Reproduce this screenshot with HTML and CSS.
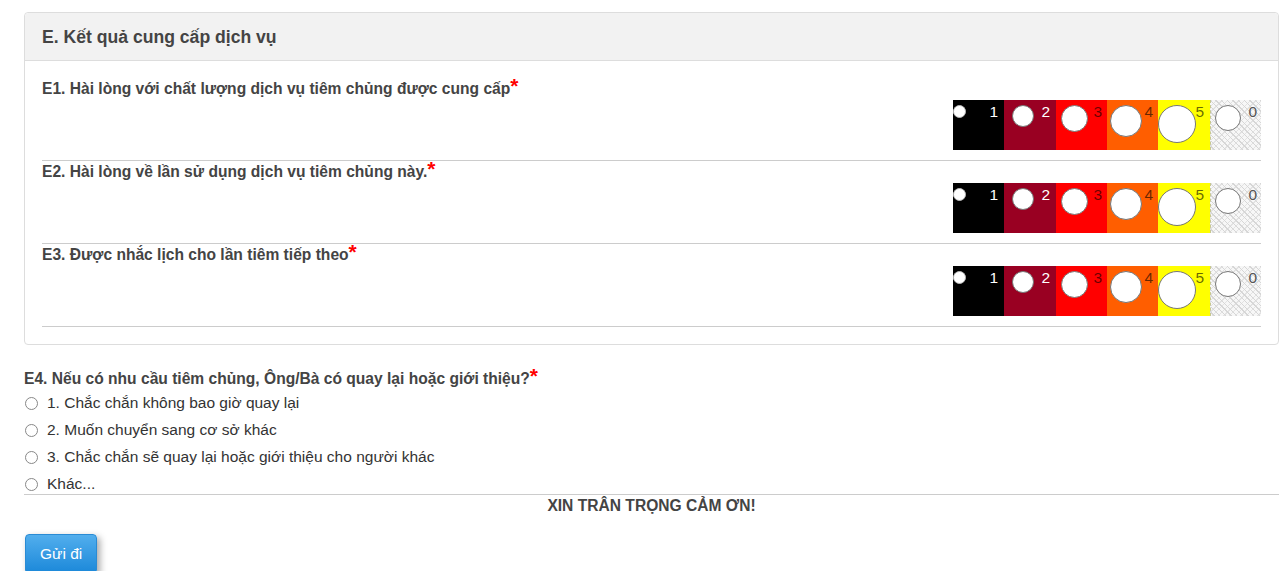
FILE: index.html
```html
<!DOCTYPE html>
<html lang="vi">
<head>
<meta charset="utf-8">
<title>Kết quả cung cấp dịch vụ</title>
<link rel="stylesheet" href="styles.css">
</head>
<body>
<div class="page">
  <section class="panel">
    <div class="panel-heading">E. Kết quả cung cấp dịch vụ</div>
    <div class="panel-body">
      <div class="q-row">
        <div class="q-label">E1. Hài lòng với chất lượng dịch vụ tiêm chủng được cung cấp<span class="req">*</span></div>
        <div class="scale">
          <label class="cell c1"><input type="radio" name="e1"><span class="num">1</span></label>
          <label class="cell c2"><input type="radio" name="e1"><span class="num">2</span></label>
          <label class="cell c3"><input type="radio" name="e1"><span class="num">3</span></label>
          <label class="cell c4"><input type="radio" name="e1"><span class="num">4</span></label>
          <label class="cell c5"><input type="radio" name="e1"><span class="num">5</span></label>
          <label class="cell c0"><input type="radio" name="e1"><span class="num">0</span></label>
        </div>
      </div>
      <div class="q-row">
        <div class="q-label">E2. Hài lòng về lần sử dụng dịch vụ tiêm chủng này.<span class="req">*</span></div>
        <div class="scale">
          <label class="cell c1"><input type="radio" name="e2"><span class="num">1</span></label>
          <label class="cell c2"><input type="radio" name="e2"><span class="num">2</span></label>
          <label class="cell c3"><input type="radio" name="e2"><span class="num">3</span></label>
          <label class="cell c4"><input type="radio" name="e2"><span class="num">4</span></label>
          <label class="cell c5"><input type="radio" name="e2"><span class="num">5</span></label>
          <label class="cell c0"><input type="radio" name="e2"><span class="num">0</span></label>
        </div>
      </div>
      <div class="q-row">
        <div class="q-label">E3. Được nhắc lịch cho lần tiêm tiếp theo<span class="req">*</span></div>
        <div class="scale">
          <label class="cell c1"><input type="radio" name="e3"><span class="num">1</span></label>
          <label class="cell c2"><input type="radio" name="e3"><span class="num">2</span></label>
          <label class="cell c3"><input type="radio" name="e3"><span class="num">3</span></label>
          <label class="cell c4"><input type="radio" name="e3"><span class="num">4</span></label>
          <label class="cell c5"><input type="radio" name="e3"><span class="num">5</span></label>
          <label class="cell c0"><input type="radio" name="e3"><span class="num">0</span></label>
        </div>
      </div>
    </div>
  </section>

  <div class="q4">
    <div class="q-label">E4. Nếu có nhu cầu tiêm chủng, Ông/Bà có quay lại hoặc giới thiệu?<span class="req">*</span></div>
    <div class="options">
      <label class="opt"><input type="radio" name="e4"><span>1. Chắc chắn không bao giờ quay lại</span></label>
      <label class="opt"><input type="radio" name="e4"><span>2. Muốn chuyển sang cơ sở khác</span></label>
      <label class="opt"><input type="radio" name="e4"><span>3. Chắc chắn sẽ quay lại hoặc giới thiệu cho người khác</span></label>
      <label class="opt"><input type="radio" name="e4"><span>Khác...</span></label>
    </div>
  </div>
  <div class="thanks">XIN TRÂN TRỌNG CẢM ƠN!</div>
  <button class="submit" type="button">Gửi đi</button>
</div>
</body>
</html>
```
FILE: styles.css
```css
* { box-sizing: border-box; }
html, body { margin: 0; padding: 0; background: #fff; }
body {
  font-family: "Liberation Sans", Arial, Helvetica, sans-serif;
  color: #444;
  overflow: hidden;
}
.page {
  padding: 12px 8px 0 24px;
}
.panel {
  border: 1px solid #ddd;
  border-radius: 4px;
  background: #fff;
}
.panel-heading {
  background: #f2f2f2;
  border-bottom: 1px solid #ddd;
  border-radius: 4px 4px 0 0;
  padding: 12px 17px 11px;
  font-size: 17.6px;
  line-height: 24px;
  font-weight: bold;
  color: #444;
}
.panel-body {
  padding: 17px 17px 17px;
}
.q-row {
  display: flex;
  flex-direction: column;
  border-bottom: 1px solid #ccc;
  padding-bottom: 10px;
}
.q-label {
  font-size: 15.6px;
  line-height: 22px;
  font-weight: bold;
  color: #444;
}
.req {
  color: #f00;
  font-size: 21px;
  line-height: 0;
  font-weight: bold;
  position: relative;
  top: -1px;
}
.scale {
  display: flex;
  justify-content: flex-end;
  height: 50px;
}
.cell {
  position: relative;
  width: 51px;
  height: 50px;
  display: flex;
  align-items: flex-start;
}
.cell input {
  appearance: none;
  -webkit-appearance: none;
  margin: 5px 0 0 0;
  border: 1px solid #777;
  border-radius: 50%;
  background: #fff;
  flex: none;
}
.num {
  position: absolute;
  top: 4px;
  right: 5px;
  font-size: 15.5px;
  line-height: 15px;
  color: rgba(0, 0, 0, 0.6);
}
.c1 { background: #000; }
.c1 input { width: 13px; height: 13px; margin-left: 0; border-color: #bbb; }
.c1 .num { color: #fff; right: 6px; }
.c2 { background: #990022; width: 52px; }
.c2 input { width: 22px; height: 22px; margin-left: 8px; }
.c2 .num { color: #fff; right: 6px; }
.c3 { background: #ff0000; }
.c3 input { width: 27px; height: 27px; margin-left: 5px; }
.c4 { background: #ff5e00; }
.c4 input { width: 32px; height: 32px; margin-left: 3px; }
.c5 { background: #ffff00; width: 52px; }
.c5 input { width: 38px; height: 38px; margin-left: 0; }
.c5 .num { right: 6px; }
.c0 {
  background-color: #f7f7f7;
  background-image:
    repeating-linear-gradient(45deg, transparent 0 2px, #d6d6d6 2px 3px, transparent 3px 4px),
    repeating-linear-gradient(-45deg, transparent 0 2px, #e2e2e2 2px 3px, transparent 3px 4px);
  border-left: 1px dashed #c8c890;
}
.c0 input { width: 26px; height: 26px; margin-left: 4px; }
.c0 .num { right: 4px; color: #555; }

.q4 {
  margin-top: 23px;
  border-bottom: 1px solid #ccc;
}
.options {
  display: flex;
  flex-direction: column;
  gap: 7px;
  padding-top: 3px;
}
.opt {
  display: flex;
  align-items: center;
  height: 20px;
  font-size: 15.5px;
  color: #333;
}
.opt input {
  appearance: none;
  -webkit-appearance: none;
  width: 13px;
  height: 13px;
  margin: 0 9px 0 1px;
  border: 1px solid #888;
  border-radius: 50%;
  background: #fff;
  flex: none;
}
.thanks {
  text-align: center;
  font-size: 15.6px;
  line-height: 22px;
  font-weight: bold;
  color: #444;
}
.submit {
  margin-top: 17px;
  margin-left: 1px;
  height: 40px;
  padding: 0 14px;
  font-family: "Liberation Sans", Arial, Helvetica, sans-serif;
  font-size: 15.5px;
  line-height: 20px;
  color: #fff;
  background: linear-gradient(#52aeed, #1b88d9);
  border: 1px solid #2a8bd4;
  border-radius: 4px;
  box-shadow: 3px 3px 7px rgba(0, 0, 0, 0.35);
  cursor: pointer;
}
```
